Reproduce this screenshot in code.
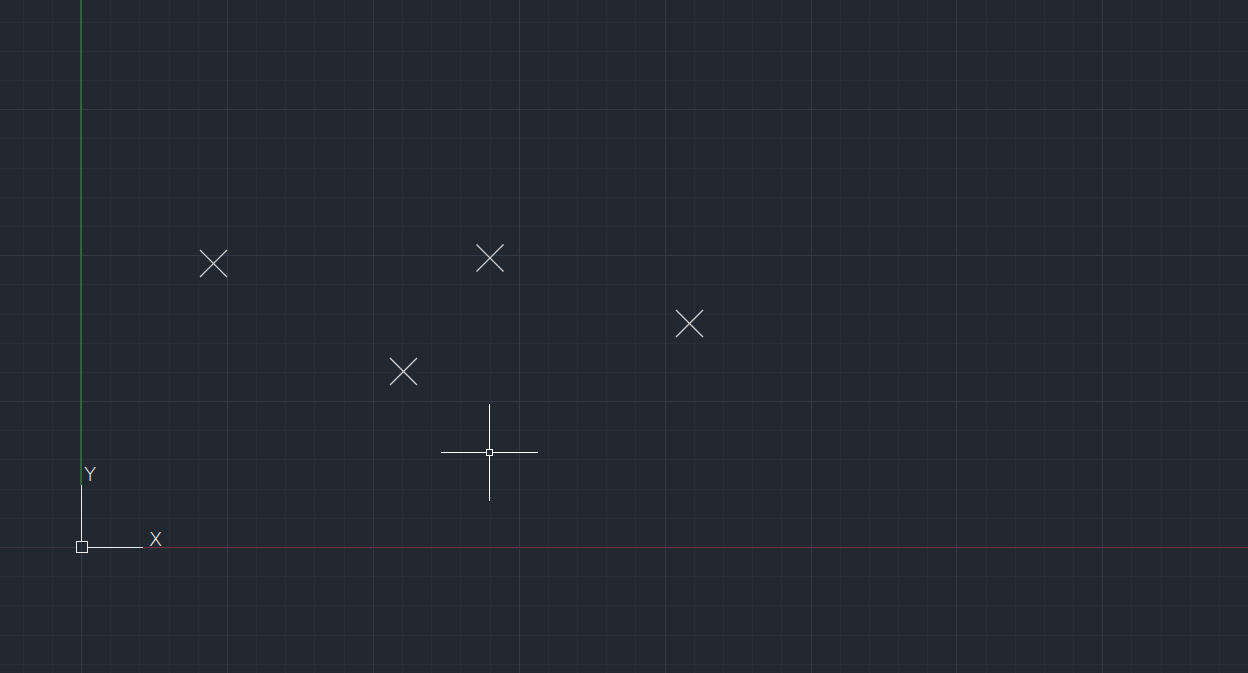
import React from "react";

const W = 1248;
const H = 673;
const ORIGIN = { x: 81, y: 547 };
const MAJOR = 145.9;
const MINOR = MAJOR / 5;

const points = [
  { x: 213.5, y: 263.5 },
  { x: 490, y: 258 },
  { x: 689.5, y: 323.5 },
  { x: 403.5, y: 371.5 },
];

function gridLines() {
  const xs: { v: number; major: boolean }[] = [];
  const ys: { v: number; major: boolean }[] = [];
  for (let k = -3; k < 45; k++) {
    const x = Math.round(ORIGIN.x + k * MINOR) + 0.5;
    if (x > 0 && x < W) xs.push({ v: x, major: k % 5 === 0 });
  }
  for (let k = -20; k < 10; k++) {
    const y = Math.round(ORIGIN.y + k * MINOR) + 0.5;
    // the x axis row is drawn separately in red
    if (y > 0 && y < H && k !== 0) ys.push({ v: y, major: k % 5 === 0 });
  }
  return { xs, ys };
}

export default function App() {
  const { xs, ys } = gridLines();
  const ox = ORIGIN.x + 0.5;
  const oy = ORIGIN.y + 0.5;

  return (
    <div className="w-[1248px] h-[673px] bg-[#212830] overflow-hidden">
      <svg width={W} height={H} viewBox={`0 0 ${W} ${H}`} className="block">
        {/* Minor grid */}
        <g stroke="#272e38" strokeWidth={1} shapeRendering="crispEdges">
          {xs.filter((l) => !l.major).map((l) => (
            <line key={`vx${l.v}`} x1={l.v} y1={0} x2={l.v} y2={H} />
          ))}
          {ys.filter((l) => !l.major).map((l) => (
            <line key={`hy${l.v}`} x1={0} y1={l.v} x2={W} y2={l.v} />
          ))}
        </g>
        {/* Major grid */}
        <g stroke="#323947" strokeWidth={1} shapeRendering="crispEdges">
          {xs.filter((l) => l.major).map((l) => (
            <line key={`VX${l.v}`} x1={l.v} y1={0} x2={l.v} y2={H} />
          ))}
          {ys.filter((l) => l.major).map((l) => (
            <line key={`HY${l.v}`} x1={0} y1={l.v} x2={W} y2={l.v} />
          ))}
        </g>

        {/* Axes */}
        <rect x={80} y={0} width={2} height={485} fill="#2e6536" />
        <rect x={0} y={547} width={76} height={1} fill="#3a333d" />
        <rect x={143} y={547} width={W - 143} height={1} fill="#6e2f3a" />
        <rect x={143} y={548} width={W - 143} height={1} fill="#2c2a34" />

        {/* UCS icon */}
        <g stroke="#ececec" strokeWidth={1} fill="none" shapeRendering="crispEdges">
          <line x1={ox} y1={485} x2={ox} y2={541.5} />
          <line x1={87.5} y1={oy} x2={143} y2={oy} />
          <rect x={76.5} y={541.5} width={11} height={11} />
        </g>
        <text
          x={90}
          y={481}
          fill="#ffffff"
          fontFamily="'DejaVu Sans', sans-serif"
          fontWeight={200}
          fontSize={20}
          textAnchor="middle"
        >
          Y
        </text>
        <text
          x={155.5}
          y={546}
          fill="#ffffff"
          fontFamily="'DejaVu Sans', sans-serif"
          fontWeight={200}
          fontSize={20}
          textAnchor="middle"
        >
          X
        </text>

        {/* Point markers */}
        <g stroke="#d4d4d4" strokeWidth={1.2}>
          {points.map((p, i) => (
            <g key={i}>
              <line x1={p.x - 13.5} y1={p.y - 13.5} x2={p.x + 13.5} y2={p.y + 13.5} />
              <line x1={p.x + 13.5} y1={p.y - 13.5} x2={p.x - 13.5} y2={p.y + 13.5} />
            </g>
          ))}
        </g>

        {/* Crosshair cursor */}
        <g stroke="#ffffff" strokeWidth={1} fill="none" shapeRendering="crispEdges">
          <line x1={489.5} y1={404} x2={489.5} y2={449} />
          <line x1={489.5} y1={456} x2={489.5} y2={501} />
          <line x1={441} y1={452.5} x2={486} y2={452.5} />
          <line x1={493} y1={452.5} x2={538} y2={452.5} />
          <rect x={486.5} y={449.5} width={6} height={6} />
        </g>
      </svg>
    </div>
  );
}
